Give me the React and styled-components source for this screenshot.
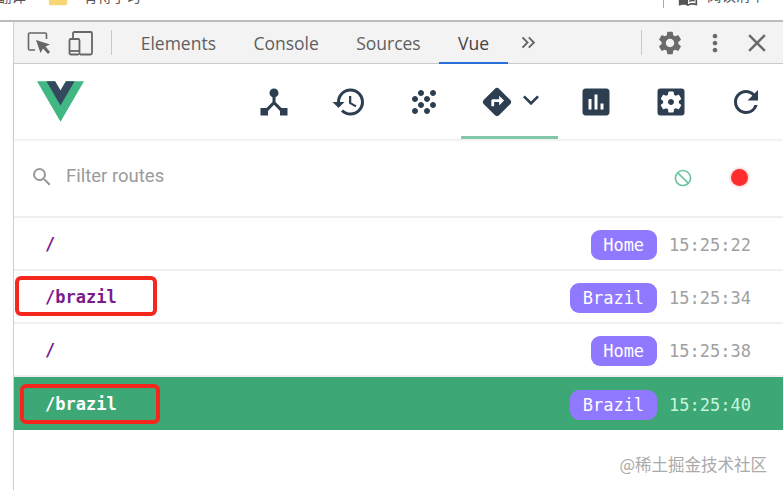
import React from "react";
import styled, { createGlobalStyle } from "styled-components";
import {
  MdDeviceHub, MdHistory, MdGrain, MdDirections, MdKeyboardArrowDown, MdAssessment,
  MdSettingsApplications, MdRefresh, MdSearch, MdNotInterested, MdSettings, MdMoreVert,
  MdClose, MdKeyboardDoubleArrowRight, MdFolder, MdOutlineMenuBook,
} from "react-icons/md";

const Global = createGlobalStyle`
  html, body { margin: 0; padding: 0; background: #fff; }
  body { width: 783px; height: 490px; overflow: hidden; font-family: "Open Sans", sans-serif; }
`;

const Page = styled.div`
  width: 783px; height: 490px; display: flex; flex-direction: column; overflow: hidden; background: #fff;
`;
const BrowserBar = styled.div`
  height: 20px; flex: none; display: flex; align-items: flex-start; overflow: hidden;
  border-bottom: 2px solid #bcbcbc; color: #555;
  font: 14.500px/20px "Noto Sans CJK SC", sans-serif;
`;
const Clipped = styled.span`
  display: flex; align-items: center; gap: 14px; margin-left: ${p => p.$left}px;
  height: 20px; margin-top: -14px; white-space: nowrap;
`;
const FolderIcon = styled(MdFolder)`color: #f7d774; font-size: 22px; flex: none; margin-top: 4px;`;
const BarDivider = styled.div`
  width: 1px; height: 8px; background: #aaa; margin-left: auto; flex: none;
`;
const ReadingIcon = styled(MdOutlineMenuBook)`font-size: 20px; margin: -12px 9px 0 14px; flex: none;`;
const ReadingLabel = styled.span`margin: -15px 18px 0 0; flex: none;`;
const Body = styled.div`flex: 1; display: flex; min-height: 0;`;
const Gutter = styled.div`width: 13px; flex: none; border-right: 1px solid #cfcfcf;`;
const Panel = styled.div`flex: 1; min-width: 0; display: flex; flex-direction: column;`;

const TabBar = styled.div`
  height: 41px; flex: none; display: flex; align-items: stretch; background: #f3f3f3;
  border-bottom: 1px solid #cdcdcd; color: #5a5a5a;
`;
const TabTool = styled.div`
  width: 42px; display: flex; align-items: center; justify-content: center; flex: none;
  margin-left: ${p => p.$ml || 0}px;
`;
const Sep = styled.div`
  width: 1px; height: 25px; background: #c8c8c8; align-self: center; flex: none;
  margin: 0 ${p => p.$mr || 0}px 0 ${p => p.$ml || 0}px;
`;
const TabStrip = styled.div`display: flex; align-items: stretch; margin-left: 10px; flex: none;`;
const Tab = styled.div`
  display: flex; align-items: center; justify-content: center; box-sizing: border-box; flex: none;
  padding: 0 18.700px; font-size: 17.500px; color: ${p => p.$active ? "#444" : "#5f5f5f"};
  margin-top: 1px;
  border-bottom: 2px solid ${p => p.$active ? "#2a6fdb" : "transparent"};
  margin-bottom: -1px;
`;
const More = styled.div`
  width: 42px; margin-right: auto; display: flex; align-items: center; justify-content: center;
  font-size: 23px; color: #666;
`;
const TabAction = styled.div`
  width: ${p => p.$w}px; display: flex; align-items: center; justify-content: center;
  font-size: ${p => p.$size}px; color: #6a6a6a; flex: none;
`;

const Toolbar = styled.div`
  height: 75px; flex: none; display: flex; align-items: stretch; position: relative;
  box-shadow: 0 1px 3px rgba(0,0,0,.1);
`;
const Logo = styled.svg`width: 47px; height: 41px; margin: 17px auto 0 23px; flex: none;`;
const ToolButton = styled.div`
  width: ${p => p.$w || 75}px; flex: none; box-sizing: border-box; display: flex; align-items: center; justify-content: center;
  font-size: 36px; color: #2c3e50; padding-top: 3px; 
  border-bottom: 3px solid ${p => p.$active ? "#82c9ab" : "transparent"};
`;
const RouteIcon = styled(MdDirections)`font-size: 34px;`;
const Caret = styled(MdKeyboardArrowDown)`font-size: 32px; margin-left: 1px; margin-right: -8px; margin-top: -3px;`;

const Filter = styled.div`
  height: 75px; flex: none; display: flex; align-items: center; box-sizing: content-box;
  padding: 0 35px 1px 16px; border-bottom: 2px solid #eeeeee; margin-top: 1px;
`;
const SearchIcon = styled(MdSearch)`font-size: 24px; color: #999; flex: none; margin-top: -1px;`;
const FilterText = styled.div`
  margin: -3px 0 0 12px; font: 18.500px "Roboto", sans-serif; color: #9a9a9a;
`;
const ClearIcon = styled(MdNotInterested)`font-size: 20px; color: #6fc5a0; margin-left: auto;`;
const RecordDot = styled.div`
  width: 17px; height: 17px; border-radius: 50%; background: #ff2d2d; margin-left: 38px;
  box-shadow: 0 0 3px 1px rgba(255,45,45,.25);
`;

const List = styled.div`flex: none;`;
const Row = styled.div`
  height: 53px; position: relative; display: flex; align-items: center; box-sizing: border-box;
  padding: 2px 32px 0 31px; font: 17px "DejaVu Sans Mono", "Liberation Mono", monospace;
  background: ${p => p.$selected ? "#3ea776" : "#fff"};
  border-bottom: ${p => p.$selected ? "none" : "2px solid #f0f0f0"};
`;
const Path = styled.span`
  font-weight: 700; margin-top: -2px; color: ${p => p.$selected ? "#fff" : "#7b1c8c"};
`;
const Tag = styled.span`
  margin-left: auto; height: 30px; line-height: 30px; padding: 0 12.500px; border-radius: 9px;
  background: #9079ff; color: #fff;
`;
const Time = styled.span`
  margin-left: 12.500px; color: ${p => p.$selected ? "#c6f5dc" : "#a0a0a0"};
`;
const Annotation = styled.div`
  position: absolute; box-sizing: border-box; left: ${p => p.$x}px; top: ${p => p.$y}px;
  width: ${p => p.$w}px; height: 40px; border: 4px solid #f5261c; border-radius: 6px;
`;
const Watermark = styled.div`
  display: flex; justify-content: flex-end; padding: 23px 16px 0 0;
  font: 16.500px "Noto Sans CJK SC", sans-serif; color: #aaa; line-height: 22px;
`;

const Inspect = () => (
  <svg width="24" height="24" viewBox="0 0 24 24" fill="none">
    <path d="M8 19H2.8C2 19 1.5 18.500 1.500 17.700V3.300C1.500 2.500 2 2 2.800 2H18.200C19 2 19.500 2.500 19.500 3.300V8" stroke="#666" strokeWidth="1.600" />
    <path d="M9 9L23 13.500L18.500 15.500L23 21L21 23L16 17.500L13.500 22Z" fill="#666" />
  </svg>
);
const Device = () => (
  <svg width="26" height="26" viewBox="0 0 26 26" fill="none" stroke="#666" strokeWidth="1.800">
    <path d="M5 8V3.500C5 2.500 5.500 2 6.500 2H22.500C23.500 2 24 2.500 24 3.500V23C24 24 23.500 24.500 22.500 24.500H12" />
    <rect x="1.500" y="9" width="10" height="15.500" rx="1.500" />
    <path d="M1.500 21H11.500" />
  </svg>
);

const rows = [
  { path: "/", tag: "Home", time: "15:25:22" },
  { path: "/brazil", tag: "Brazil", time: "15:25:34", note: { x: 1, y: 5, w: 142 } },
  { path: "/", tag: "Home", time: "15:25:38" },
  { path: "/brazil", tag: "Brazil", time: "15:25:40", selected: true, note: { x: 6, y: 7, w: 140 } },
];

export default function App() {
  return (
    <Page>
      <Global />
      <BrowserBar>
        <Clipped $left={-3}>翻译</Clipped>
        <Clipped $left={21}><FolderIcon />有待学习</Clipped>
        <BarDivider />
        <ReadingIcon />
        <ReadingLabel>阅读清单</ReadingLabel>
      </BrowserBar>
      <Body>
        <Gutter />
        <Panel>
          <TabBar>
            <TabTool $ml={4}><Inspect /></TabTool>
            <TabTool><Device /></TabTool>
            <Sep $ml={9} />
            <TabStrip>
              <Tab>Elements</Tab>
              <Tab>Console</Tab>
              <Tab>Sources</Tab>
              <Tab $active>Vue</Tab>
            </TabStrip>
            <More><MdKeyboardDoubleArrowRight /></More>
            <Sep />
            <TabAction $w={56} $size={28}><MdSettings /></TabAction>
            <TabAction $w={33} $size={28}><MdMoreVert /></TabAction>
            <TabAction $w={52} $size={30}><MdClose /></TabAction>
          </TabBar>
          <Toolbar>
            <Logo viewBox="0 0 261.76 226.69">
              <path d="M161.096.001l-30.225 52.351L100.647.001H-.005l130.877 226.688L261.749.001z" fill="#41b883" />
              <path d="M161.096.001l-30.225 52.351L100.647.001H52.346l78.526 136.01L209.398.001z" fill="#34495e" />
            </Logo>
            <ToolButton><MdDeviceHub /></ToolButton>
            <ToolButton><MdHistory /></ToolButton>
            <ToolButton><MdGrain /></ToolButton>
            <ToolButton $w={97} $active><RouteIcon /><Caret /></ToolButton>
            <ToolButton><MdAssessment /></ToolButton>
            <ToolButton><MdSettingsApplications /></ToolButton>
            <ToolButton><MdRefresh /></ToolButton>
          </Toolbar>
          <Filter>
            <SearchIcon />
            <FilterText>Filter routes</FilterText>
            <ClearIcon />
            <RecordDot />
          </Filter>
          <List>
            {rows.map((r, i) => (
              <Row key={i} $selected={r.selected}>
                <Path $selected={r.selected}>{r.path}</Path>
                <Tag>{r.tag}</Tag>
                <Time $selected={r.selected}>{r.time}</Time>
                {r.note && <Annotation $x={r.note.x} $y={r.note.y} $w={r.note.w} />}
              </Row>
            ))}
          </List>
          <Watermark>@稀土掘金技术社区</Watermark>
        </Panel>
      </Body>
    </Page>
  );
}
